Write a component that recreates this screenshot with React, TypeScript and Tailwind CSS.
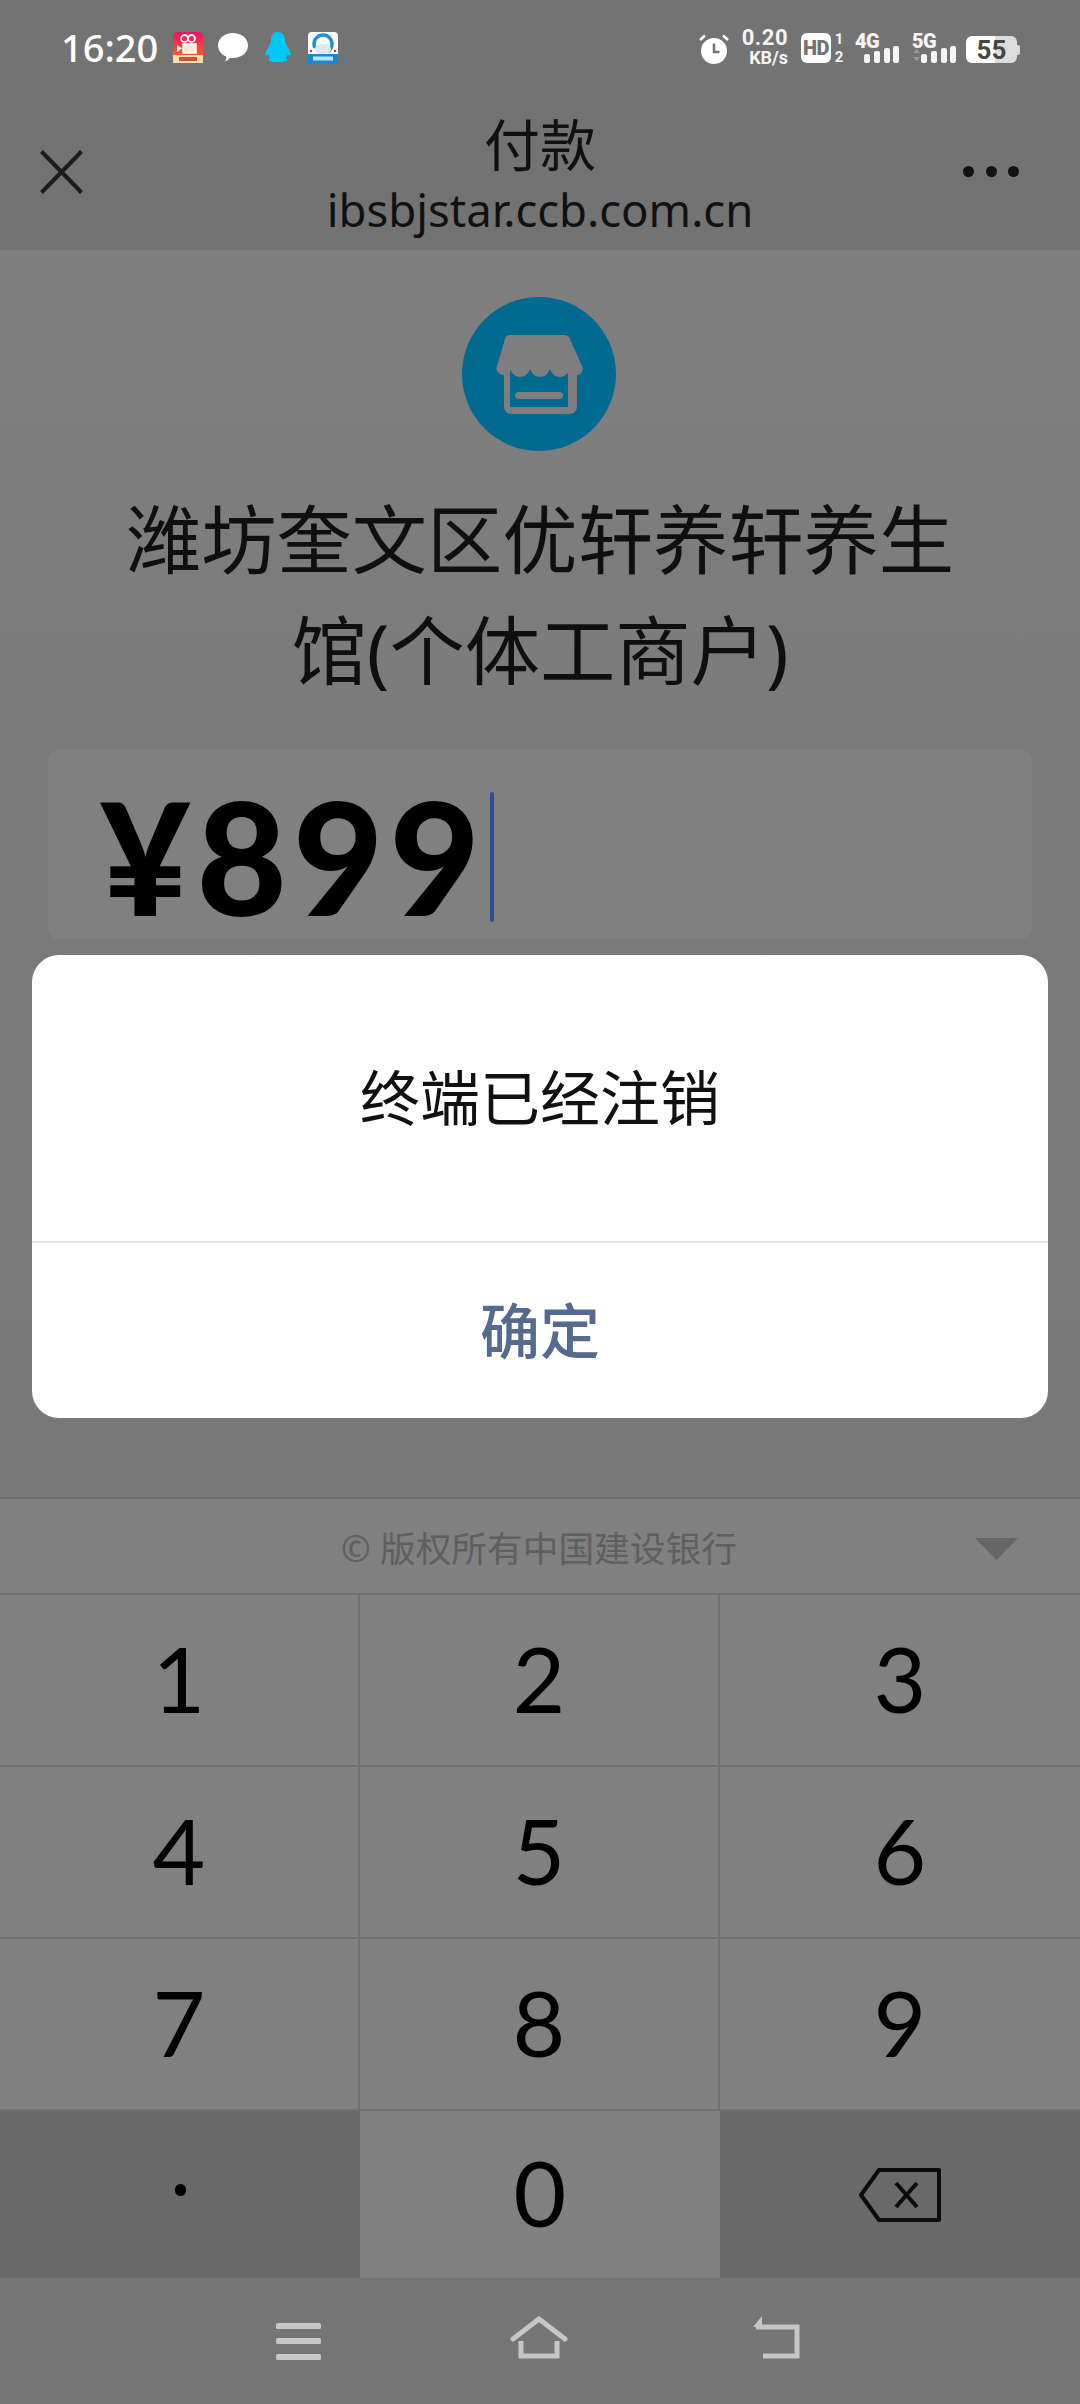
import type { ReactNode } from "react";

const CJK = "font-['Noto_Sans','Noto_Sans_CJK_SC',sans-serif]";

function SignalBars({ label, arrows }: { label: string; arrows?: boolean }) {
	return (
		<div className="relative h-[34px] w-[44px]">
			<span className="absolute top-[-2px] left-0 font-['Roboto',sans-serif] text-[20px] leading-[20px] font-black tracking-[-0.5px] text-[#f4f4f4]">
				{label}
			</span>
			<svg
				viewBox="0 0 44 34"
				className="absolute inset-0 h-[34px] w-[44px]"
				fill="#f4f4f4"
			>
				{arrows && (
					<>
						<path d="M1 20h7l-3.500-4z" fill="#9a9a9a" />
						<path d="M1 24h7l-3.500 4z" fill="#9a9a9a" />
					</>
				)}
				<rect x="9" y="21" width="6" height="9" rx="2" />
				<rect x="19" y="18" width="6" height="12" rx="2" />
				<rect x="29" y="15" width="6" height="15" rx="2" />
				<rect x="38" y="13" width="6" height="17" rx="2" />
			</svg>
		</div>
	);
}

function StatusBar() {
	return (
		<div className="flex h-[94px] items-start justify-between pt-[30px] pr-[60px] pl-[61px]">
			<div className="flex h-[34px] items-center">
				<span className="w-[112px] font-['Noto_Sans',sans-serif] text-[38px] leading-[34px] font-medium text-white">
					16:20
				</span>
				<svg viewBox="0 0 30 31" className="h-[31px] w-[30px]">
					<defs>
						<linearGradient id="ks" x1="0" y1="0" x2="0" y2="1">
							<stop offset="0" stopColor="#f2105f" />
							<stop offset="1" stopColor="#f9761f" />
						</linearGradient>
					</defs>
					<rect width="30" height="31" rx="5" fill="url(#ks)" />
					<rect y="23" width="30" height="8" fill="#f6dfae" />
					<rect x="6" y="25" width="18" height="4" fill="#d2502f" />
					<circle cx="11.500" cy="6.500" r="3.500" fill="none" stroke="#fff" strokeWidth="1.800" />
					<circle cx="18.500" cy="6.500" r="3.500" fill="none" stroke="#fff" strokeWidth="1.800" />
					<rect x="10" y="12" width="13" height="9" fill="#ffe9d0" stroke="#fff" strokeWidth="1.500" />
					<path d="M4 13l5 3.500-5 3.500z" fill="#fff" />
				</svg>
				<svg viewBox="0 0 30 30" className="ml-[15px] h-[30px] w-[30px]">
					<path
						d="M15 1c8 0 15 5 15 12.500S23 26 15 26c-1 0-2 0-3-.2-1 1.500-3 3-5 3.700 1-1.500 1.400-3.500 1.200-5C3.500 22.500 0 18.500 0 13.500 0 6 7 1 15 1z"
						fill="#fff"
					/>
				</svg>
				<svg viewBox="0 0 26 30" className="ml-[17px] h-[30px] w-[26px]">
					<path
						d="M13 0c4.500 0 7 3.500 7 8 0 2 .5 3 2 6 2 3.500 4 7 3.800 9-.2 1.200-2 .5-3-1-.3 1.500-1 3-2 4 1.500.8 2 1.500 1.500 2.500-1 1.200-4 1.500-9.300 1.500s-8.300-.3-9.300-1.500c-.5-1 0-1.700 1.500-2.500-1-1-1.700-2.500-2-4-1 1.500-2.800 2.200-3 1C-.2 21 1.800 17.500 4 14c1.500-3 2-4 2-6 0-4.500 2.500-8 7-8z"
						fill="#00c8f5"
					/>
				</svg>
				<svg viewBox="0 0 30 31" className="ml-[17px] h-[31px] w-[30px]">
					<rect width="30" height="31" rx="4" fill="#fff" />
					<circle cx="15" cy="12" r="9" fill="none" stroke="#1f8fe0" strokeWidth="3.500" strokeDasharray="42 15" strokeDashoffset="-24" />
					<ellipse cx="15" cy="17" rx="8" ry="5" fill="#d8e9f5" />
					<rect y="22" width="30" height="9" fill="#1488d8" />
					<rect x="5" y="24.500" width="20" height="4" fill="#bfe3fa" />
					<circle cx="3" cy="19" r="1.200" fill="#e0202a" />
					<circle cx="27" cy="19" r="1.200" fill="#e0202a" />
				</svg>
			</div>
			<div className="flex h-[36px] items-start">
				<svg viewBox="0 0 30 30" className="mt-[4px] h-[30px] w-[30px]">
					<circle cx="15" cy="17" r="13" fill="#fff" />
					<path d="M15 9.500V18h5.500" fill="none" stroke="#737373" strokeWidth="2.500" />
					<path d="M1 6l5-4.500M29 6l-5-4.500" fill="none" stroke="#fff" strokeWidth="2.500" />
				</svg>
				<div className="mt-[-3px] ml-[12px] flex w-[47px] flex-col items-end font-['Roboto',sans-serif] font-bold text-[#f4f4f4]">
					<span className="text-[22px] leading-[22px] tracking-[0.5px]">0.20</span>
					<span className="text-[18px] leading-[18px]">KB/s</span>
				</div>
				<div className="mt-[3px] ml-[13px] flex h-[30px] w-[30px] items-center justify-center rounded-[6px] bg-white font-['Roboto',sans-serif] text-[20px] leading-none font-black tracking-[-0.5px] text-[#737373]">
					HD
				</div>
				<div className="mt-[2px] ml-[2px] flex h-[32px] w-[12px] flex-col items-center justify-between font-['Roboto',sans-serif] text-[15px] leading-[14px] font-bold text-[#f4f4f4]">
					<span>1</span>
					<span>2</span>
				</div>
				<div className="mt-[3px] ml-[10px]">
					<SignalBars label="4G" />
				</div>
				<div className="mt-[3px] ml-[13px]">
					<SignalBars label="5G" arrows />
				</div>
				<div className="mt-[6px] ml-[10px] flex h-[27px] items-center">
					<div className="flex h-[27px] w-[51px] items-center justify-center rounded-[6px] bg-[linear-gradient(90deg,#fff_0,#fff_56%,#dcdcdc_56%,#dcdcdc_100%)] font-['Roboto',sans-serif] text-[26px] leading-none font-bold text-[#454545]">
						55
					</div>
					<div className="h-[10px] w-[3px] rounded-r-[2px] bg-[#dcdcdc]" />
				</div>
			</div>
		</div>
	);
}

function TitleBar() {
	return (
		<div className="grid h-[156px] grid-cols-[1fr_auto_1fr] items-start px-[40px]">
			<svg
				viewBox="0 0 43 44"
				className="mt-[56px] h-[44px] w-[43px]"
				stroke="#1c1c1c"
				strokeWidth="4"
			>
				<path d="M1.500 1.500l40 41M41.500 1.500l-40 41" fill="none" />
			</svg>
			<div className={`flex flex-col items-center text-[#111] ${CJK}`}>
				<span className="mt-[15px] text-[56px] leading-[70px]">付款</span>
				<span className="text-[45.500px] leading-[60px]">ibsbjstar.ccb.com.cn</span>
			</div>
			<div className="mt-[72px] mr-[21px] flex justify-end gap-[11.500px]">
				<span className="size-[11px] rounded-full bg-[#111]" />
				<span className="size-[11px] rounded-full bg-[#111]" />
				<span className="size-[11px] rounded-full bg-[#111]" />
			</div>
		</div>
	);
}

function ShopAvatar() {
	return (
		<svg viewBox="0 0 154 154" className="mr-[2px] h-[154px] w-[154px]">
			<circle cx="77" cy="77" r="77" fill="#006a90" />
			<path
				d="M48 38h54c3 0 5 1 6 4l12 27c2 5-1 9-5 9v31c0 5-3 8-8 8H50c-5 0-8-3-8-8V78c-5 0-9-4-7-9l8-27c1-3 2-4 5-4z"
				fill="#7e7e7e"
			/>
			<path
				d="M48 72c2 5 6 8 10 8 5 0 8-3 10-8 2 5 5 8 10 8s8-3 10-8c2 5 5 8 10 8 3 0 6-2 8-4v34H48z"
				fill="#006a90"
			/>
			<rect x="53" y="95" width="48" height="7" rx="3.500" fill="#7e7e7e" />
		</svg>
	);
}

function Key({ children, className }: { children: ReactNode; className: string }) {
	return (
		<div
			className={`flex items-center justify-center font-['Lato',sans-serif] text-[91px] leading-none font-normal text-black ${className}`}
		>
			{children}
		</div>
	);
}

const digitRows = ["1", "2", "3", "4", "5", "6", "7", "8", "9"];

function Keypad() {
	return (
		<div className="bg-[#808080]">
			<div className="flex h-[96px] items-center border-t-2 border-[#707070] pt-[6px] pr-[62px] pl-[341px]">
				<span className={`flex-1 text-[35.700px] leading-none text-[#5f5f5f] ${CJK}`}>
					© 版权所有中国建设银行
				</span>
				<svg viewBox="0 0 43 22" className="h-[22px] w-[43px]" fill="#666">
					<path d="M0 0h43L21.500 22z" />
				</svg>
			</div>
			<div className="grid grid-cols-3 border-t-2 border-[#707070]">
				{digitRows.map((d, i) => (
					<Key
						key={d}
						className={`h-[172px] border-b-2 border-[#707070] pb-[6px] ${i % 3 !== 2 ? "border-r-2" : ""}`}
					>
						{d}
					</Key>
				))}
				<Key className="h-[167px] bg-[#696969]">
					<span className="mb-[10px] h-[12px] w-[11px] rounded-full bg-black" />
				</Key>
				<Key className="h-[167px] pb-[6px]">0</Key>
				<Key className="h-[167px] bg-[#696969]">
					<svg
						viewBox="0 0 82 54"
						className="h-[54px] w-[82px]"
						fill="none"
						stroke="#0c0c0c"
						strokeWidth="4"
					>
						<path d="M20 2h60v50H20L2 27z" strokeLinejoin="round" />
						<path d="M37 15l21 24M58 15L37 39" />
					</svg>
				</Key>
			</div>
		</div>
	);
}

function NavBar() {
	return (
		<div className="flex h-[126px] items-start justify-center bg-[#757575] pt-[38px]">
			<svg viewBox="0 0 45 37" className="mt-[7px] h-[37px] w-[45px]" fill="#c6c6c6">
				<rect width="45" height="6" rx="1.500" />
				<rect y="15" width="45" height="6" rx="1.500" />
				<rect y="31" width="45" height="6" rx="1.500" />
			</svg>
			<svg
				viewBox="0 0 58 44"
				className="ml-[189px] h-[44px] w-[58px]"
				fill="none"
				stroke="#c6c6c6"
				strokeWidth="5"
			>
				<path d="M3 23L29 3l26 20" strokeLinecap="round" />
				<path d="M11 25v15h36V25" />
			</svg>
			<svg
				viewBox="0 0 48 43"
				className="mr-[4px] ml-[184px] h-[43px] w-[48px]"
				fill="none"
				stroke="#c6c6c6"
				strokeWidth="5"
			>
				<path d="M4 11h41v29H11" />
				<path d="M10 0L1 11h9z" fill="#c6c6c6" stroke="none" />
			</svg>
		</div>
	);
}

export default function App() {
	return (
		<div className={`relative flex h-[2404px] w-[1080px] flex-col overflow-hidden bg-[#7b7b7b] ${CJK}`}>
			<div className="bg-[#737373]">
				<StatusBar />
				<TitleBar />
			</div>
			<main className="flex flex-1 flex-col items-center bg-[linear-gradient(180deg,#7f7f7f_0,#7b7b7b_40%,#787878_100%)] pt-[47px]">
				<ShopAvatar />
				<h1 className="mt-[33px] w-[860px] text-center text-[75.300px] leading-[111px] font-normal text-[#0f0f0f]">
					潍坊奎文区优轩养轩养生馆(个体工商户)
				</h1>
				<div className="mt-[43px] flex h-[190px] w-[984px] items-center rounded-[12px] bg-[#808080] pt-[24px] pl-[52px]">
					<span className="font-['Lato',sans-serif] text-[156px] leading-none font-black tracking-[6px] text-black">
						¥899
					</span>
					<span className="mt-[2px] ml-[4px] h-[130px] w-[4px] rounded-full bg-[#2f4a96]" />
				</div>
			</main>
			<Keypad />
			<NavBar />

			<div className="absolute top-[955px] left-[32px] w-[1016px] overflow-hidden rounded-[27px] bg-white">
				<div className="flex h-[286px] items-center justify-center text-[60px] text-[#111]">
					终端已经注销
				</div>
				<div className="flex h-[177px] items-center justify-center border-t-2 border-[#e3e3e3] text-[60px] font-medium text-[#56698f]">
					确定
				</div>
			</div>
		</div>
	);
}
